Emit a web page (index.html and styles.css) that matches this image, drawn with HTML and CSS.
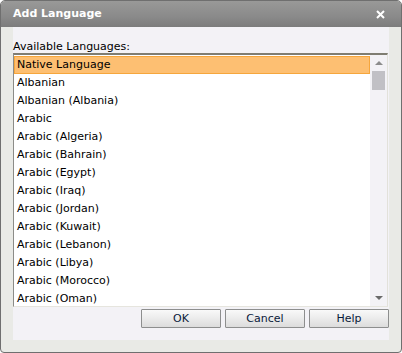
FILE: index.html
```
<!DOCTYPE html>
<html>
<head>
<meta charset="utf-8">
<title>Add Language</title>
<link rel="stylesheet" href="styles.css">
</head>
<body>
<div class="window">
  <div class="titlebar">
    <span class="title">Add Language</span>
    <svg class="close" width="9" height="9" viewBox="0 0 9 9"><path d="M1 1 L8 8 M8 1 L1 8" stroke="#ffffff" stroke-width="2" fill="none"/></svg>
  </div>
  <div class="frame">
    <div class="panel">
      <div class="label">Available Languages:</div>
      <div class="listbox">
        <div class="items">
          <div class="item selected">Native Language</div>
          <div class="item">Albanian</div>
          <div class="item">Albanian (Albania)</div>
          <div class="item">Arabic</div>
          <div class="item">Arabic (Algeria)</div>
          <div class="item">Arabic (Bahrain)</div>
          <div class="item">Arabic (Egypt)</div>
          <div class="item">Arabic (Iraq)</div>
          <div class="item">Arabic (Jordan)</div>
          <div class="item">Arabic (Kuwait)</div>
          <div class="item">Arabic (Lebanon)</div>
          <div class="item">Arabic (Libya)</div>
          <div class="item">Arabic (Morocco)</div>
          <div class="item">Arabic (Oman)</div>
        </div>
        <div class="scrollbar">
          <div class="sbtn"><span class="arrow-up"></span></div>
          <div class="thumb"></div>
          <div class="track"></div>
          <div class="sbtn"><span class="arrow-down"></span></div>
        </div>
      </div>
      <div class="buttons">
        <button class="btn">OK</button>
        <button class="btn">Cancel</button>
        <button class="btn">Help</button>
      </div>
    </div>
  </div>
</div>
</body>
</html>
```
FILE: styles.css
```
html, body {
  margin: 0;
  padding: 0;
  background: #ffffff;
}
body {
  font-family: "DejaVu Sans", Verdana, sans-serif;
  font-size: 11px;
  color: #000;
}
.window {
  width: 402px;
  height: 353px;
  box-sizing: border-box;
  border: 1px solid #6f6f6f;
  border-radius: 5px 5px 4px 4px;
  overflow: hidden;
  display: flex;
  flex-direction: column;
  background: #e9eae6;
}
.titlebar {
  height: 26px;
  flex: none;
  display: flex;
  align-items: center;
  justify-content: space-between;
  padding: 0 16px 0 12px;
  background: linear-gradient(#999998, #8a8a8a 60%, #7c7c7c);
}
.title {
  color: #ffffff;
  font-weight: bold;
  font-size: 11px;
  line-height: 26px;
}
.close {
  display: block;
}
.frame {
  flex: 1;
  padding: 0 12px 12px 12px;
  display: flex;
}
.panel {
  flex: 1;
  background: #f3f2f6;
  padding-top: 13px;
  display: flex;
  flex-direction: column;
}
.label {
  line-height: 13px;
  height: 13px;
  color: #000;
}
.listbox {
  width: 375px;
  height: 254px;
  box-sizing: border-box;
  border-top: 2px solid #7f7d72;
  border-left: 1px solid #8c8c88;
  border-right: 1px solid #e2e1da;
  border-bottom: 1px solid #e6e5de;
  background: #ffffff;
  display: flex;
  overflow: hidden;
}
.items {
  width: 356px;
  padding-top: 1px;
  flex: none;
}
.item {
  height: 18px;
  line-height: 18px;
  padding-left: 3px;
  box-sizing: border-box;
  white-space: nowrap;
}
.item.selected {
  background: #fdbf72;
  border: 1px solid #f6a63c;
  line-height: 16px;
  padding-left: 2px;
}
.scrollbar {
  width: 17px;
  flex: none;
  background: #f3f2f6;
  display: flex;
  flex-direction: column;
  align-items: center;
}
.sbtn {
  height: 16px;
  width: 100%;
  display: flex;
  align-items: center;
  justify-content: center;
  flex: none;
}
.arrow-up {
  width: 0;
  height: 0;
  border-left: 4px solid transparent;
  border-right: 4px solid transparent;
  border-bottom: 4px solid #8c8c8c;
}
.arrow-down {
  width: 0;
  height: 0;
  border-left: 4px solid transparent;
  border-right: 4px solid transparent;
  border-top: 4px solid #6a6a6a;
}
.thumb {
  width: 13px;
  height: 19px;
  background: #c1c0c5;
  flex: none;
}
.track {
  flex: 1;
}
.buttons {
  margin-top: 2px;
  display: flex;
  justify-content: flex-end;
  gap: 4px;
}
.btn {
  width: 80px;
  height: 19px;
  margin: 0;
  padding: 0;
  box-sizing: border-box;
  border: 1px solid #8d8e8e;
  border-radius: 1px;
  background: linear-gradient(#f9f9f9, #ebebeb 50%, #dcdcdc);
  font-family: "DejaVu Sans", Verdana, sans-serif;
  font-size: 11px;
  color: #0a1a3a;
  line-height: 17px;
}
```
